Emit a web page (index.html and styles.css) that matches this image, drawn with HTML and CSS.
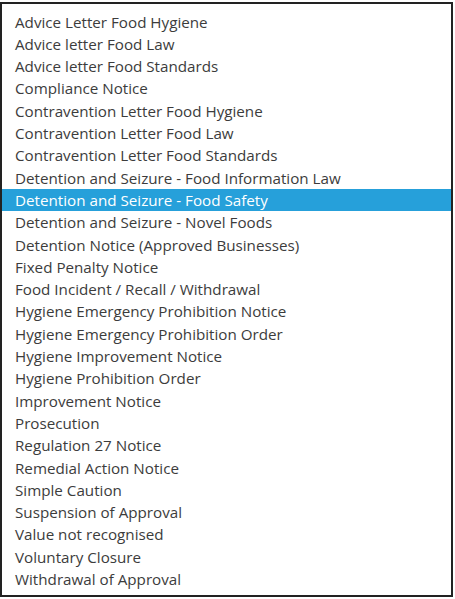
FILE: index.html
```html
<!DOCTYPE html>
<html>
<head>
<meta charset="utf-8">
<link rel="stylesheet" href="styles.css">
</head>
<body>
<div class="listbox">
  <ul class="options">
    <li class="option">Advice Letter Food Hygiene</li>
    <li class="option">Advice letter Food Law</li>
    <li class="option">Advice letter Food Standards</li>
    <li class="option">Compliance Notice</li>
    <li class="option">Contravention Letter Food Hygiene</li>
    <li class="option">Contravention Letter Food Law</li>
    <li class="option">Contravention Letter Food Standards</li>
    <li class="option">Detention and Seizure - Food Information Law</li>
    <li class="option selected">Detention and Seizure - Food Safety</li>
    <li class="option">Detention and Seizure - Novel Foods</li>
    <li class="option">Detention Notice (Approved Businesses)</li>
    <li class="option">Fixed Penalty Notice</li>
    <li class="option">Food Incident / Recall / Withdrawal</li>
    <li class="option">Hygiene Emergency Prohibition Notice</li>
    <li class="option">Hygiene Emergency Prohibition Order</li>
    <li class="option">Hygiene Improvement Notice</li>
    <li class="option">Hygiene Prohibition Order</li>
    <li class="option">Improvement Notice</li>
    <li class="option">Prosecution</li>
    <li class="option">Regulation 27 Notice</li>
    <li class="option">Remedial Action Notice</li>
    <li class="option">Simple Caution</li>
    <li class="option">Suspension of Approval</li>
    <li class="option">Value not recognised</li>
    <li class="option">Voluntary Closure</li>
    <li class="option">Withdrawal of Approval</li>
  </ul>
</div>
</body>
</html>
```

FILE: styles.css
```css
html, body {
  margin: 0;
  padding: 0;
  background: #ffffff;
}
body {
  width: 455px;
  height: 599px;
  overflow: hidden;
  padding-top: 2px;
  box-sizing: border-box;
}
.listbox {
  width: 453px;
  height: 595px;
  box-sizing: border-box;
  border: 2px solid #222222;
  background: #ffffff;
  padding: 6.6px 0 0 0;
}
.options {
  list-style: none;
  margin: 0;
  padding: 0;
}
.option {
  height: 22.3px;
  line-height: 23.3px;
  padding-left: 13px;
  font-family: "Open Sans", "Noto Sans", sans-serif;
  font-size: 15.2px;
  color: #3c3c3c;
  white-space: nowrap;
  overflow: hidden;
}
.option.selected {
  background: #26a0da;
  color: #ffffff;
}
```
